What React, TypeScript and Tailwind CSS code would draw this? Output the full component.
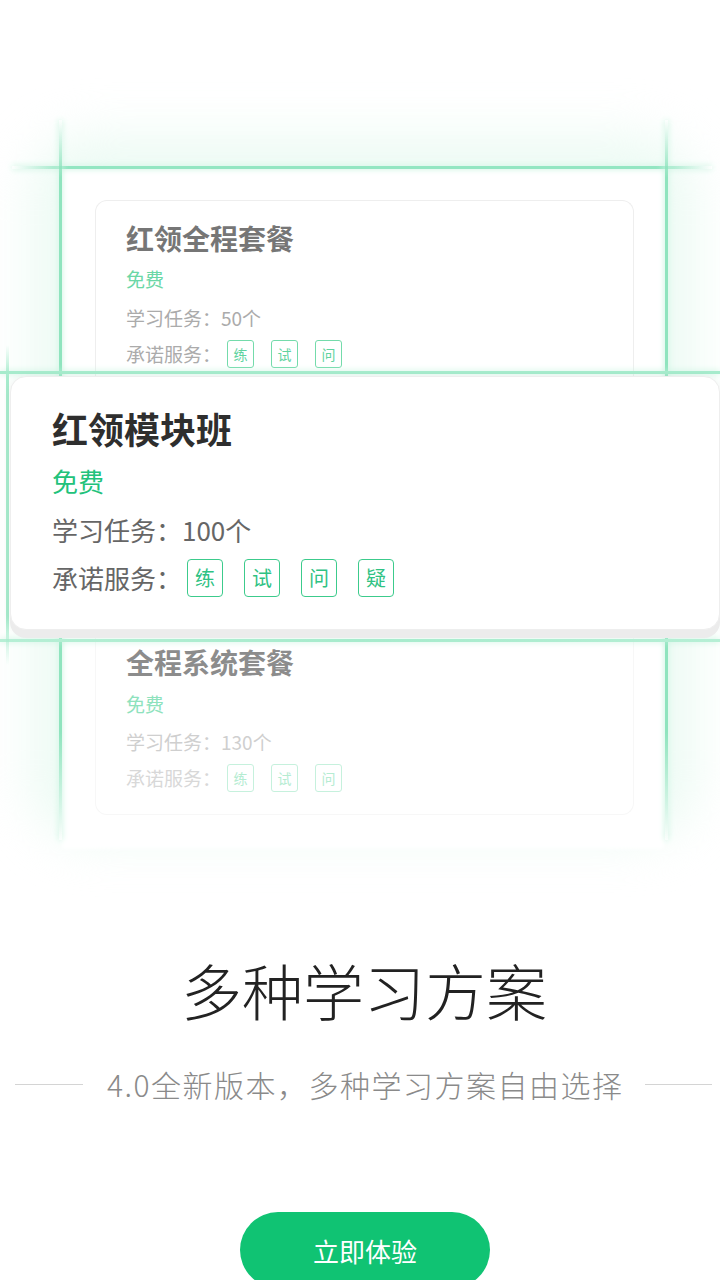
const services = ["练", "试", "问", "疑"];

function BackCard({
  title,
  tasks,
  faded,
}: {
  title: string;
  tasks: string;
  faded?: boolean;
}) {
  return (
    <div
      className={
        faded
          ? "ml-[95px] h-[185px] w-[539px] rounded-b-xl border border-t-0 border-[#f7f7f7] bg-white pt-[18px] pl-[30px]"
          : "ml-[95px] h-[176px] w-[539px] overflow-hidden rounded-t-xl border border-b-0 border-[#eeeeee] bg-white pt-[23px] pl-[30px]"
      }
    >
      <div
        className={
          faded
            ? "text-[28px] leading-[28px] font-bold text-[#8c8c8c]"
            : "text-[28px] leading-[28px] font-bold text-[#767676]"
        }
      >
        {title}
      </div>
      <div
        className={
          faded
            ? "mt-[18px] text-[19px] leading-[20px] text-[#8ee2bd]"
            : "mt-[17px] text-[19px] leading-[20px] text-[#6bd7a6]"
        }
      >
        免费
      </div>
      <div
        className={
          faded
            ? "mt-[18px] text-[19px] leading-[20px] text-[#cfcfcf]"
            : "mt-[19px] text-[19px] leading-[20px] text-[#ababab]"
        }
      >
        学习任务：{tasks}
      </div>
      <div className="mt-[12px] flex h-[28px] items-center">
        <span
          className={
            faded
              ? "text-[19px] leading-[20px] text-[#d8d8d8]"
              : "text-[19px] leading-[20px] text-[#ababab]"
          }
        >
          承诺服务：
        </span>
        <div className="ml-[6px] flex gap-[17px]">
          {services.slice(0, 3).map((s) => (
            <span
              key={s}
              className={
                faded
                  ? "flex h-[28px] w-[27px] items-center justify-center rounded-[3px] border border-[#c6f1dd] text-[14px] text-[#b5ecd2]"
                  : "flex h-[28px] w-[27px] items-center justify-center rounded-[3px] border-[1.5px] border-[#74dbab] text-[14px] text-[#5fd39f]"
              }
            >
              {s}
            </span>
          ))}
        </div>
      </div>
    </div>
  );
}

export default function App() {
  return (
    <div className="relative h-[1280px] w-[720px] overflow-hidden bg-white font-['Noto_Sans_CJK_SC','Noto_Sans',sans-serif]">
      <section className="relative h-[880px]">
        {/* glow frame */}
        <div className="absolute left-[30px] top-[135px] h-[705px] w-[666px] rounded-[60px] bg-[#edfbf4] blur-xl" />
        <div className="absolute left-[62px] top-[169px] h-[680px] w-[602px] bg-white blur-[2px]" />
        <div className="absolute left-[12px] top-[166px] h-[3px] w-[700px] bg-[linear-gradient(90deg,transparent,#93e6c2_8%,#93e6c2_92%,transparent)] shadow-[0_0_6px_#c4f2dd]" />
        <div className="absolute left-[59px] top-[120px] h-[720px] w-[3px] bg-[linear-gradient(180deg,transparent,#8fe4be_8%,#8fe4be_85%,transparent)] shadow-[0_0_6px_#c4f2dd]" />
        <div className="absolute left-[665px] top-[120px] h-[720px] w-[3px] bg-[linear-gradient(180deg,transparent,#8fe4be_8%,#8fe4be_85%,transparent)] shadow-[0_0_6px_#c4f2dd]" />

        <div className="relative pt-[200px]">
          <BackCard title="红领全程套餐" tasks="50个" />

          {/* lines crossing the stack */}
          <div className="absolute left-0 top-[371px] z-10 h-[3px] w-[720px] bg-[#a6ebcc] shadow-[0_0_6px_#c4f2dd]" />
          <div className="absolute left-0 top-[639px] z-10 h-[3px] w-[720px] bg-[linear-gradient(90deg,#b6efd5,#a6ebcc_50%,#b6efd5)] shadow-[0_0_6px_#c4f2dd]" />
          <div className="absolute left-[6px] top-[345px] z-10 h-[320px] w-[3px] bg-[linear-gradient(180deg,transparent,#a6ebcc_10%,#a6ebcc_85%,transparent)]" />

          <div className="relative z-20 ml-[10px] h-[254px] w-[710px] rounded-2xl border border-[#eeeeee] bg-white pl-[41px] shadow-[0_8px_0_0_#ececec,0_2px_8px_rgba(0,0,0,0.06)]">
            <div className="pt-[33px] text-[36px] leading-[36px] font-bold text-[#2e2e2e]">
              红领模块班
            </div>
            <div className="mt-[22px] text-[26px] leading-[26px] text-[#22c27b]">免费</div>
            <div className="mt-[23px] text-[26px] leading-[26px] text-[#666666]">
              学习任务：100个
            </div>
            <div className="mt-[16px] flex h-[38px] items-center">
              <span className="text-[26px] leading-[26px] text-[#666666]">承诺服务：</span>
              <div className="ml-[5px] flex gap-[21px]">
                {services.map((s) => (
                  <span
                    key={s}
                    className="flex h-[38px] w-[36px] items-center justify-center rounded-[4px] border-[1.5px] border-[#3ccb8c] text-[20px] text-[#2fc283]"
                  >
                    {s}
                  </span>
                ))}
              </div>
            </div>
          </div>

          <BackCard title="全程系统套餐" tasks="130个" faded />
        </div>
      </section>

      <h1 className="mt-[80px] pl-[8px] text-center text-[61px] leading-[60px] font-light text-[#222222]">
        多种学习方案
      </h1>

      <div className="mt-[49px] flex items-center pl-[15px]">
        <span className="h-px w-[68px] bg-[#d4d4d4]" />
        <span className="ml-[24px] w-[515px] text-center text-[30px] leading-[30px] font-light tracking-[1.5px] whitespace-nowrap text-[#8a8a8a]">
          4.0全新版本，多种学习方案自由选择
        </span>
        <span className="ml-[23px] h-px w-[67px] bg-[#d4d4d4]" />
      </div>

      <div className="mt-[113px] flex justify-center pl-[10px]">
        <button className="h-[76px] w-[250px] rounded-full bg-[#10c373] text-[26px] text-white">
          立即体验
        </button>
      </div>
    </div>
  );
}
